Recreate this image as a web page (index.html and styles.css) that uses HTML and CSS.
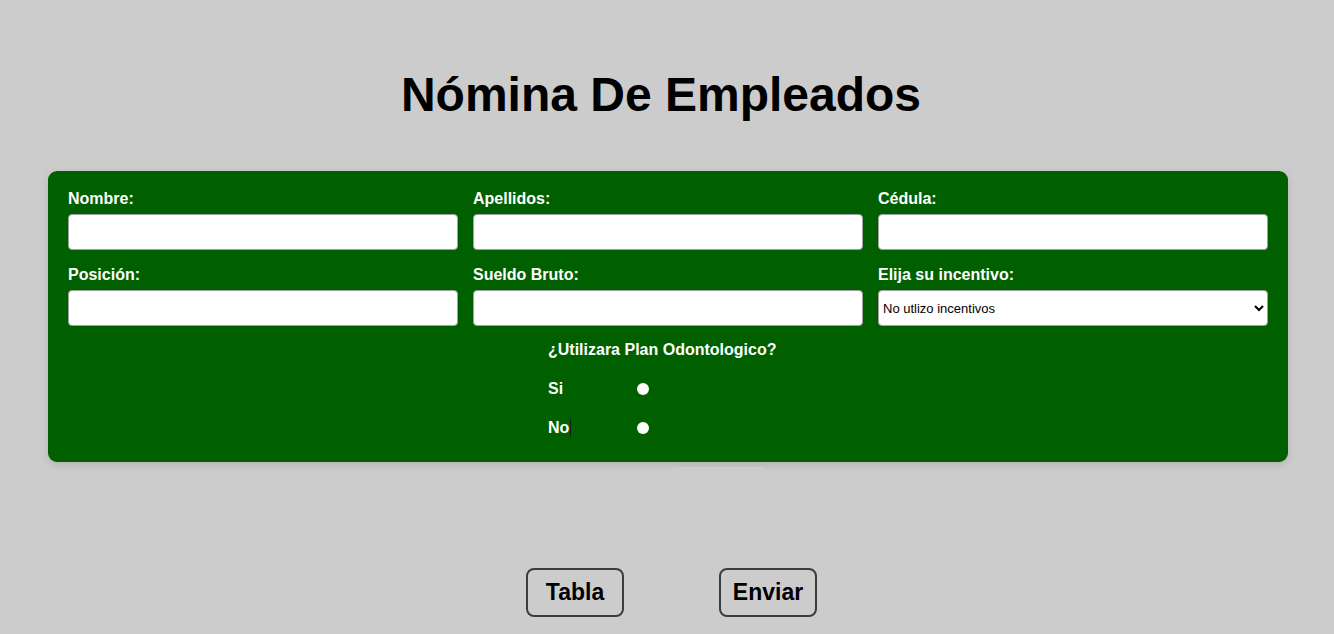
FILE: index.html
```html
<!DOCTYPE html>
<html lang="es">
<head>
<meta charset="utf-8">
<title>Nómina De Empleados</title>
<link rel="stylesheet" href="styles.css">
</head>
<body>
<h1 class="title">Nómina De Empleados</h1>
<form class="card">
  <div class="grid">
    <div class="field">
      <label class="label">Nombre:</label>
      <input class="input" type="text">
    </div>
    <div class="field">
      <label class="label">Apellidos:</label>
      <input class="input" type="text">
    </div>
    <div class="field">
      <label class="label">Cédula:</label>
      <input class="input" type="text">
    </div>
    <div class="field">
      <label class="label">Posición:</label>
      <input class="input" type="text">
    </div>
    <div class="field">
      <label class="label">Sueldo Bruto:</label>
      <input class="input" type="text">
    </div>
    <div class="field">
      <label class="label">Elija su incentivo:</label>
      <select class="select">
        <option>No utlizo incentivos</option>
      </select>
    </div>
  </div>
  <div class="plan">
    <div class="plan-q">¿Utilizara Plan Odontologico?</div>
    <div class="plan-row"><span class="plan-opt">Si</span><input class="radio" type="radio" name="plan"></div>
    <div class="plan-row"><span class="plan-opt">No<span class="caret"></span></span><input class="radio" type="radio" name="plan"></div>
  </div>
</form>
<div class="result"></div>
<div class="actions">
  <button class="btn" type="button">Tabla</button>
  <button class="btn" type="button">Enviar</button>
</div>
</body>
</html>
```
FILE: styles.css
```css
html, body {
  margin: 0;
  padding: 0;
}
body {
  background: #cccccc;
  font-family: "Liberation Sans", Arial, sans-serif;
  color: #000;
  height: 634px;
  overflow: hidden;
}
.title {
  margin: 67px 0 0 0;
  padding-right: 12px;
  text-align: center;
  font-size: 48px;
  line-height: 55px;
  font-weight: bold;
}
.card {
  margin: 49px 0 0 48px;
  width: 1240px;
  box-sizing: border-box;
  padding: 19px 20px 15px 20px;
  background: #006000;
  border-radius: 9px;
  box-shadow: 0 3px 8px rgba(0, 0, 0, 0.12);
}
.grid {
  display: grid;
  grid-template-columns: repeat(3, 390px);
  column-gap: 15px;
  row-gap: 16px;
}
.field {
  display: flex;
  flex-direction: column;
}
.label {
  display: block;
  color: #fff;
  font-weight: bold;
  font-size: 16px;
  line-height: 18px;
  margin-bottom: 6px;
}
.input {
  box-sizing: border-box;
  width: 390px;
  height: 36px;
  margin: 0;
  border: 1px solid #a0a0a0;
  border-radius: 4px;
  background: #fff;
}
.select {
  box-sizing: border-box;
  width: 390px;
  height: 36px;
  margin: 0;
  border: 1px solid #a0a0a0;
  border-radius: 4px;
  background: #fff;
  font-family: "Liberation Sans", Arial, sans-serif;
  font-size: 13px;
  color: #000;
}
.plan {
  width: 240px;
  margin: 15px auto 0 auto;
  color: #fff;
  font-weight: bold;
  font-size: 16px;
}
.plan-q {
  line-height: 18px;
  margin-bottom: 10px;
}
.plan-row {
  display: flex;
  align-items: center;
  height: 39px;
}
.plan-opt {
  width: 89px;
  line-height: 18px;
  display: flex;
  align-items: center;
}
.caret {
  display: block;
  width: 1px;
  height: 18px;
  background: #1a1a1a;
  margin-left: 1px;
}
.radio {
  appearance: none;
  -webkit-appearance: none;
  width: 12px;
  height: 12px;
  margin: 0;
  border-radius: 50%;
  background: #fff;
  border: none;
}
.result {
  width: 100px;
  height: 24px;
  margin: 5px 0 0 668px;
  background: #cccccc;
  border-radius: 8px;
}
.actions {
  display: flex;
  justify-content: center;
  gap: 95px;
  margin-top: 77px;
  padding-left: 9px;
}
.btn {
  box-sizing: border-box;
  width: 98px;
  height: 49px;
  margin: 0;
  padding: 0;
  border: 2px solid #3c3c3c;
  border-radius: 8px;
  background: transparent;
  font-family: "Liberation Sans", Arial, sans-serif;
  font-size: 23px;
  font-weight: bold;
  color: #000;
}
```
